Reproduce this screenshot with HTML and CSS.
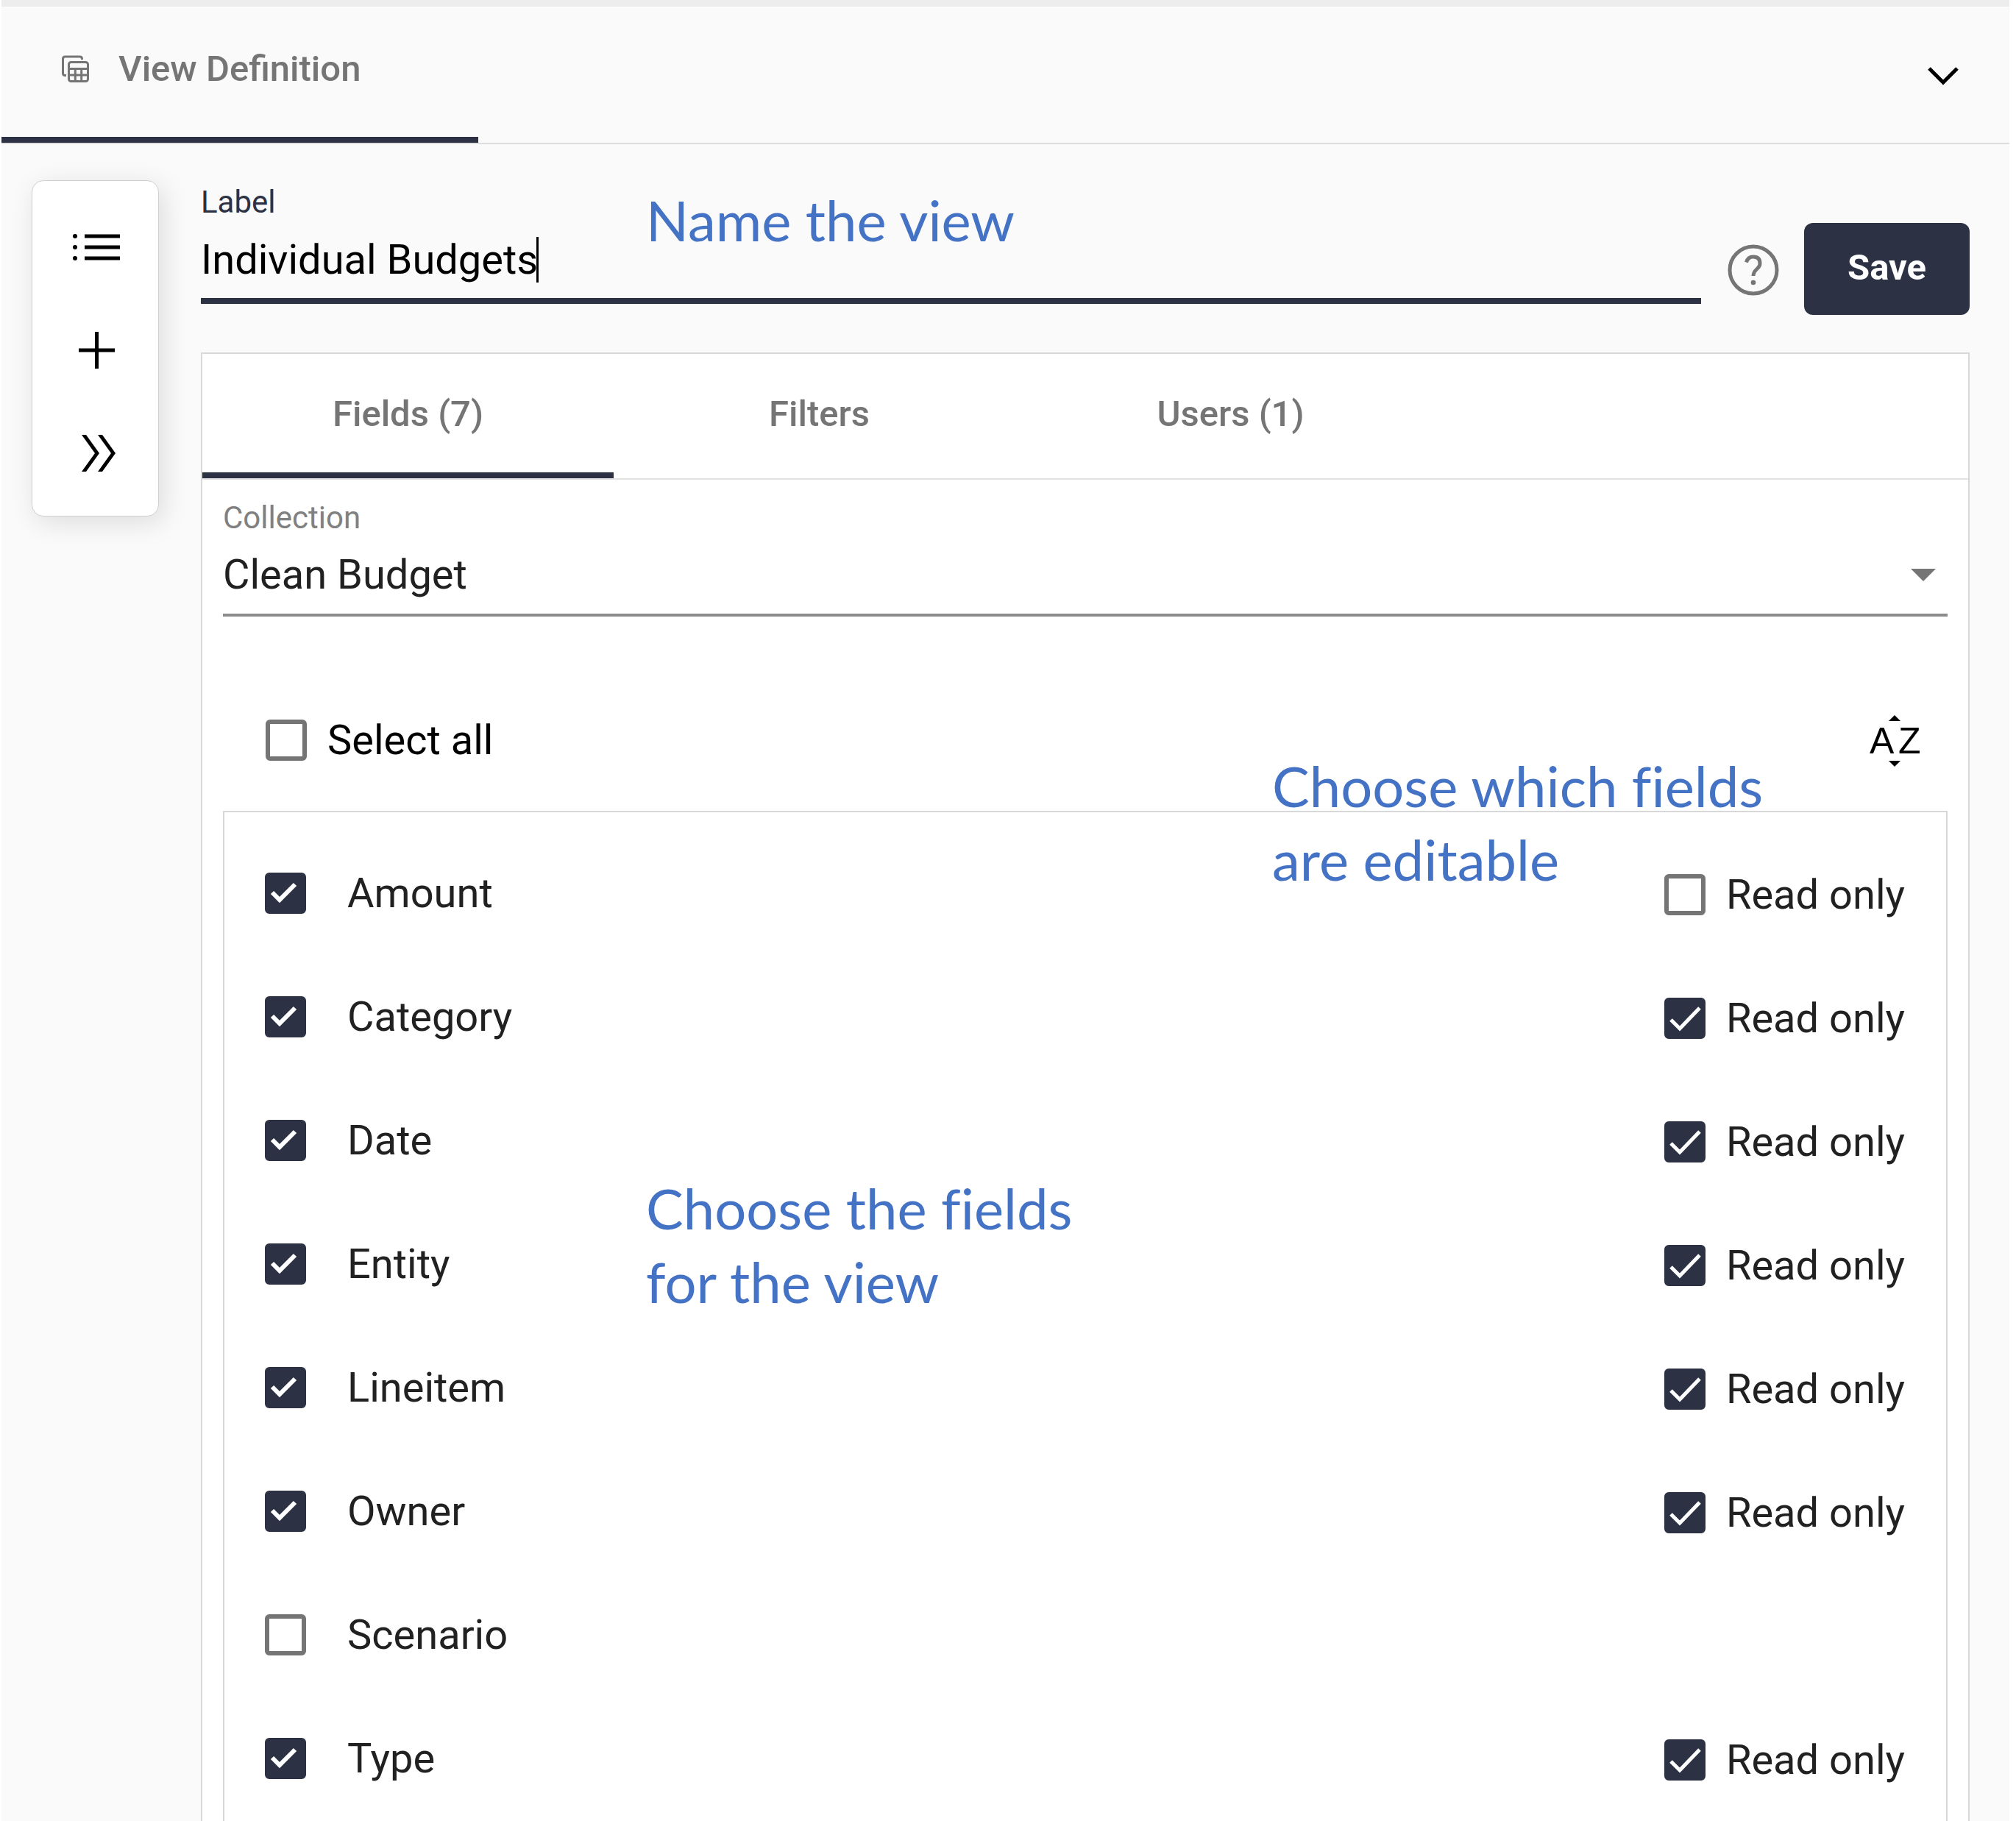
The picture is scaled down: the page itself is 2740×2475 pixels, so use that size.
FILE: index.html
```html
<!DOCTYPE html>
<html lang="en">
<head>
<meta charset="utf-8">
<title>View Definition</title>
<link rel="stylesheet" href="styles.css">
</head>
<body>
<svg class="sprite" aria-hidden="true">
  <symbol id="tick-bold" viewBox="0 0 56 56"><path d="M10 27l10 10 21-21" fill="none" stroke="#fff" stroke-width="6"/></symbol>
  <symbol id="tick-thin" viewBox="0 0 56 56"><path d="M9 30l12 12 27-28" fill="none" stroke="#fff" stroke-width="5"/></symbol>
</svg>
<div class="app">
  <header class="topbar">
    <a class="topbar-tab" href="#view">
      <svg class="topbar-icon" viewBox="0 0 38 38" aria-hidden="true">
        <path d="M27.500 6V5q0-3-3-3H4.500q-3 0-3 3v19.500q0 3 3 3H6" fill="none" stroke="currentColor" stroke-width="3"/>
        <rect x="9.500" y="9.500" width="26" height="26" rx="3" fill="none" stroke="currentColor" stroke-width="3"/>
        <path d="M9 18.500h27M9 27h27M18.300 18.500V36M26.700 18.500V36" fill="none" stroke="currentColor" stroke-width="3"/>
      </svg>
      View Definition
    </a>
    <button class="icon-button collapse" type="button" aria-label="Collapse">
      <svg width="42" height="26" viewBox="0 0 42 26"><path d="M2 2l19 19 19-19" fill="none" stroke="#000" stroke-width="5"/></svg>
    </button>
  </header>

  <div class="workspace">
    <nav class="rail" aria-label="Views">
      <button class="icon-button" type="button" aria-label="List">
        <svg width="72" height="72" viewBox="0 0 72 72"><path d="M21 21h48M21 36h48M21 51h48" stroke="#000" stroke-width="5"/><circle cx="8" cy="21" r="3"/><circle cx="8" cy="36" r="3"/><circle cx="8" cy="51" r="3"/></svg>
      </button>
      <button class="icon-button" type="button" aria-label="Add">
        <svg width="72" height="72" viewBox="0 0 72 72"><path d="M13 36h49M37.500 11v50" stroke="#000" stroke-width="5"/></svg>
      </button>
      <button class="icon-button" type="button" aria-label="Expand">
        <svg width="72" height="72" viewBox="0 0 72 72"><path d="M17 11h6l18 25-18 25h-6l18-25zM39 11h6l18 25-18 25h-6l18-25z"/></svg>
      </button>
    </nav>

    <main class="editor">
      <div class="name-row">
        <div class="name-field">
          <label class="field-label active" for="view-name">Label</label>
          <div class="name-line">
            <input id="view-name" class="name-input" type="text" value="Individual Budgets"><span class="caret"></span>
          </div>
        </div>
        <button class="icon-button help" type="button" aria-label="Help">
          <svg width="70" height="70" viewBox="0 0 70 70" fill="none" stroke="#757575" stroke-width="5"><circle cx="35" cy="35" r="32"/><path d="M25.500 24.500q2-7.500 9.500-7.500 9 0 9 9 0 4-4.500 8T35 43"/><circle cx="35" cy="52" r="3.300" fill="#757575" stroke="none"/></svg>
        </button>
        <button class="save" type="button">Save</button>
        <p class="note note-name">Name the view</p>
      </div>

      <section class="card">
        <nav class="tabs">
          <a class="tab selected" href="#fields">Fields (7)</a>
          <a class="tab" href="#filters">Filters</a>
          <a class="tab" href="#users">Users (1)</a>
        </nav>
        <div class="card-body">
          <label class="field-label" for="collection">Collection</label>
          <div class="select-line">
            <select id="collection" class="select"><option>Clean Budget</option></select>
            <svg class="select-arrow" width="34" height="17" viewBox="0 0 34 17"><path d="M0 0h34L17 17z" fill="#757575"/></svg>
          </div>

          <div class="select-all">
            <label class="option all"><span class="box"><input type="checkbox"></span>Select all</label>
            <button class="icon-button" type="button" aria-label="Sort by name">
              <svg class="sort-icon" width="70" height="72" viewBox="0 0 70 72"><path d="M27 10l8-8 8 8zM27 64h16l-8 8z"/><text x="1" y="54">A</text><text x="40" y="54">Z</text></svg>
            </button>
          </div>

          <ul class="fields">
            <li class="row"><label class="option"><span class="box"><input type="checkbox" checked><svg><use href="#tick-bold"/></svg></span>Amount</label><label class="option read"><span class="box"><input type="checkbox"></span>Read only</label></li>
            <li class="row"><label class="option"><span class="box"><input type="checkbox" checked><svg><use href="#tick-bold"/></svg></span>Category</label><label class="option read"><span class="box"><input type="checkbox" checked><svg><use href="#tick-thin"/></svg></span>Read only</label></li>
            <li class="row"><label class="option"><span class="box"><input type="checkbox" checked><svg><use href="#tick-bold"/></svg></span>Date</label><label class="option read"><span class="box"><input type="checkbox" checked><svg><use href="#tick-thin"/></svg></span>Read only</label></li>
            <li class="row"><label class="option"><span class="box"><input type="checkbox" checked><svg><use href="#tick-bold"/></svg></span>Entity</label><label class="option read"><span class="box"><input type="checkbox" checked><svg><use href="#tick-thin"/></svg></span>Read only</label></li>
            <li class="row"><label class="option"><span class="box"><input type="checkbox" checked><svg><use href="#tick-bold"/></svg></span>Lineitem</label><label class="option read"><span class="box"><input type="checkbox" checked><svg><use href="#tick-thin"/></svg></span>Read only</label></li>
            <li class="row"><label class="option"><span class="box"><input type="checkbox" checked><svg><use href="#tick-bold"/></svg></span>Owner</label><label class="option read"><span class="box"><input type="checkbox" checked><svg><use href="#tick-thin"/></svg></span>Read only</label></li>
            <li class="row"><label class="option"><span class="box"><input type="checkbox"></span>Scenario</label></li>
            <li class="row"><label class="option"><span class="box"><input type="checkbox" checked><svg><use href="#tick-bold"/></svg></span>Type</label><label class="option read"><span class="box"><input type="checkbox" checked><svg><use href="#tick-thin"/></svg></span>Read only</label></li>
          </ul>
        </div>
        <p class="note note-editable">Choose which fields<br>are editable</p>
        <p class="note note-fields">Choose the fields<br>for the view</p>
      </section>
    </main>
  </div>
</div>
</body>
</html>
```
FILE: styles.css
```css
* { box-sizing: border-box; }

body {
  margin: 0;
  background: #fff;
  color: #212121;
  font-family: Roboto, sans-serif;
  font-size: 56px;
  line-height: 64px;
}

.sprite { display: none; }

.app {
  margin: 0 9px 0 2px;
  min-height: 100vh;
  background: #fafafa;
  border-top: 9px solid #ededed;
}

.icon-button {
  display: flex;
  padding: 0;
  border: 0;
  background: none;
}

.topbar {
  display: flex;
  justify-content: space-between;
  align-items: flex-start;
  height: 187px;
  border-bottom: 2px solid #dedede;
}

.topbar-tab {
  display: flex;
  align-items: center;
  gap: 39px;
  width: 648px;
  height: 185px;
  padding: 0 0 8px 82px;
  border-bottom: 8px solid #2c3244;
  color: #757575;
  font-size: 49px;
  font-weight: 500;
  text-decoration: none;
}

.topbar-icon { width: 38px; height: 38px; }

.collapse { margin: 82px 69px 0 0; }

.workspace {
  display: flex;
  align-items: flex-start;
  gap: 57px;
  padding: 49px 54px 0 41px;
}

.rail {
  display: flex;
  flex: none;
  flex-direction: column;
  align-items: center;
  gap: 68px;
  width: 173px;
  padding: 54px 0 49px;
  border: 1px solid #d0d0d0;
  border-radius: 16px;
  background: #fff;
  box-shadow: 6px 8px 36px rgba(0, 0, 0, 0.12);
}

.editor { flex: 1; min-width: 0; }

.name-row {
  position: relative;
  display: flex;
  align-items: flex-start;
}

.name-field { flex: 1; min-width: 0; padding-top: 2px; }

.field-label {
  display: block;
  color: #808080;
  font-size: 42px;
  line-height: 56px;
}

.field-label.active { color: #2c3244; }

.name-line {
  display: flex;
  align-items: center;
  height: 110px;
  padding-bottom: 2px;
  border-bottom: 8px solid #2c3244;
}

.name-input {
  field-sizing: content;
  height: 64px;
  padding: 0;
  border: 0;
  outline: 0;
  background: none;
  color: #000;
  font: inherit;
}

.caret { width: 3px; height: 62px; margin-left: -2px; background: #000; }

.help { margin: 87px 34px 0 36px; }

.save {
  width: 225px;
  height: 125px;
  margin-top: 58px;
  padding: 0 0 4px;
  border: 0;
  border-radius: 12px;
  background: #2c3244;
  color: #fff;
  font: 700 49px/64px Roboto, sans-serif;
}

.card {
  position: relative;
  margin-top: 51px;
  border: 2px solid #d8d8d8;
  background: #fff;
}

.tabs { display: flex; border-bottom: 2px solid #e2e2e2; }

.tab {
  flex: none;
  width: 559px;
  height: 169px;
  padding-top: 50px;
  border-bottom: 8px solid transparent;
  color: #757575;
  font-size: 49px;
  font-weight: 500;
  text-align: center;
  text-decoration: none;
}

.tab.selected { border-color: #2c3244; }

.card-body { padding: 24px 28px 60px; }

.select-line {
  display: flex;
  align-items: center;
  height: 106px;
  padding-bottom: 4px;
  border-bottom: 4px solid #8c8c8c;
}

.select {
  flex: 1;
  height: 64px;
  padding: 0;
  border: 0;
  appearance: none;
  background: none;
  color: #212121;
  font: inherit;
}

.select-arrow { margin-right: 16px; }

.select-all {
  display: flex;
  align-items: center;
  justify-content: space-between;
  height: 264px;
  padding: 100px 37px 28px 58px;
}

.option { display: flex; align-items: center; gap: 56px; }
.option.all { gap: 28px; color: #000; }
.option.read { gap: 28px; padding-top: 4px; }

.box { display: grid; width: 56px; height: 56px; }
.box > * { grid-area: 1 / 1; width: 56px; height: 56px; }
.box svg { pointer-events: none; }
.box input {
  margin: 0;
  border: 6px solid #757575;
  border-radius: 6px;
  appearance: none;
  background: #fff;
}
.box input:checked { border-color: #2c3244; background: #2c3244; }

.sort-icon { font-size: 50px; font-weight: 500; }

.fields {
  margin: 0;
  padding: 26px 56px 60px 55px;
  border: 2px solid #d8d8d8;
  list-style: none;
}

.row {
  display: flex;
  align-items: center;
  justify-content: space-between;
  height: 168px;
}

.note {
  position: absolute;
  margin: 0;
  color: #4472c4;
  font-family: Lato, sans-serif;
  font-size: 76px;
  font-variant-ligatures: none;
  line-height: 100px;
  white-space: nowrap;
}

.note-name { top: 4px; left: 605px; }
.note-editable { top: 537px; left: 1454px; }
.note-fields { top: 1111px; left: 603px; }
```
